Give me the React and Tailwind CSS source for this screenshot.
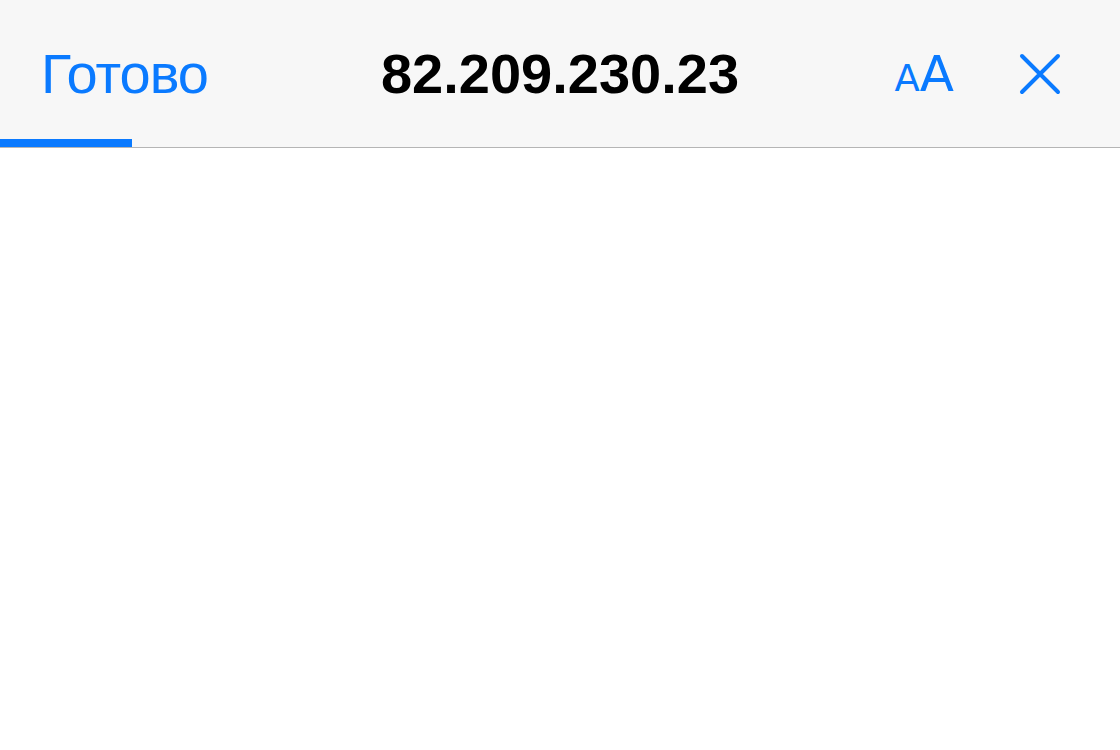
import React from 'react';

const App = () => {
  return (
    <div className="w-[1120px] h-[750px] bg-white font-['Liberation_Sans',sans-serif]">
      <div className="relative h-[148px] bg-[#f7f7f7] border-b border-[#b5b5b5] flex items-center px-[41px]">
        <div className="flex-1 text-[56px] leading-none tracking-[-1px] text-[#0a7aff] pt-[1px]">Готово</div>
        <div className="absolute left-0 right-0 top-0 h-[147px] flex items-center justify-center pointer-events-none">
          <span className="text-[56px] leading-none font-bold text-black">82.209.230.23</span>
        </div>
        <div className="flex items-center gap-[67px] pr-[18px]">
          <div className="flex items-baseline text-[#0a7aff] font-['DejaVu_Sans',sans-serif] leading-none">
            <span className="text-[37px]">A</span>
            <span className="text-[50px] tracking-[-2px]">A</span>
          </div>
          <svg width="42" height="42" viewBox="0 0 42 42" fill="none" stroke="#0a7aff" strokeWidth="4" strokeLinecap="round">
            <path d="M3 3L39 39M39 3L3 39" />
          </svg>
        </div>
        <div className="absolute left-0 bottom-0 w-[132px] h-[8px] bg-[#0a7aff]" />
      </div>
    </div>
  );
};

export default App;
